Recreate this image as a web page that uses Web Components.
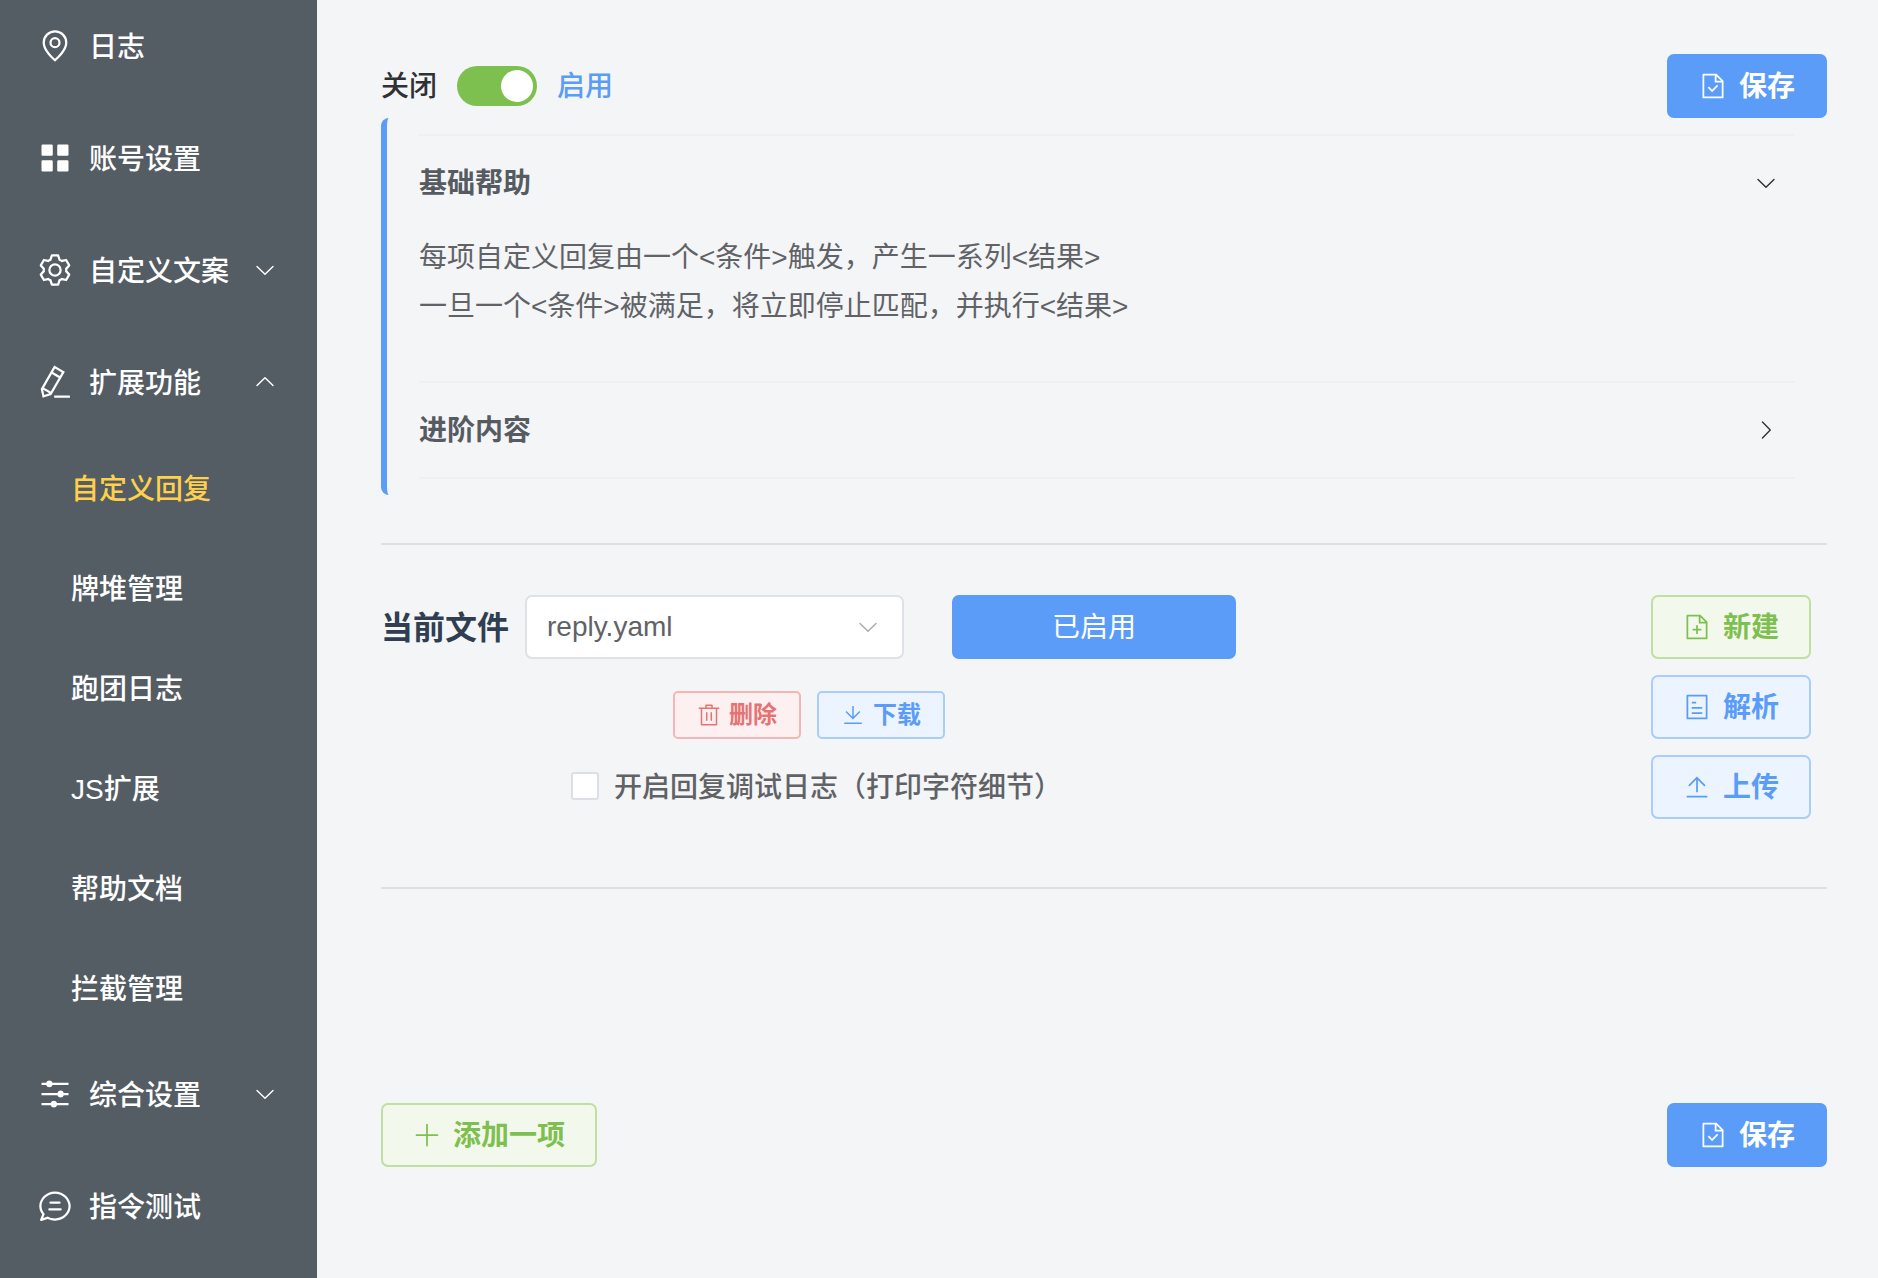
<!DOCTYPE html>
<html lang="zh">
<head>
<meta charset="utf-8">
<title>自定义回复</title>
<style>
  html, body { margin: 0; height: 100%; overflow: hidden; }
  body { font-family: "Liberation Sans", "Noto Sans CJK SC", sans-serif; background: #f4f5f7; }
</style>
</head>
<body>
<app-shell>
  <app-sidebar slot="side">
    <menu-item icon="location">日志</menu-item>
    <menu-item icon="menu">账号设置</menu-item>
    <menu-item icon="setting" arrow="down">自定义文案</menu-item>
    <menu-item icon="pen" arrow="up">扩展功能</menu-item>
    <sub-item active>自定义回复</sub-item>
    <sub-item>牌堆管理</sub-item>
    <sub-item>跑团日志</sub-item>
    <sub-item>JS扩展</sub-item>
    <sub-item>帮助文档</sub-item>
    <sub-item>拦截管理</sub-item>
    <menu-item icon="operation" arrow="down">综合设置</menu-item>
    <menu-item icon="chat">指令测试</menu-item>
  </app-sidebar>

  <page-bar>
    <toggle-switch off-label="关闭" on-label="启用"></toggle-switch>
    <app-button slot="end" kind="primary" icon="doc-check" width="160">保存</app-button>
  </page-bar>

  <help-panel>
    <help-section title="基础帮助" open>
      <div>每项自定义回复由一个&lt;条件&gt;触发，产生一系列&lt;结果&gt;</div>
      <div>一旦一个&lt;条件&gt;被满足，将立即停止匹配，并执行&lt;结果&gt;</div>
    </help-section>
    <help-section title="进阶内容"></help-section>
  </help-panel>

  <page-rule gap-top="48"></page-rule>

  <file-bar>
    <span slot="label">当前文件</span>
    <file-select slot="select" value="reply.yaml"></file-select>
    <app-button slot="state" kind="primary" width="284" plainweight>已启用</app-button>
    <app-button slot="small" kind="danger" icon="delete" small width="128">删除</app-button>
    <app-button slot="small" kind="info" icon="download" small width="128">下载</app-button>
    <check-box slot="check">开启回复调试日志（打印字符细节）</check-box>
    <app-button slot="side" kind="success" icon="doc-add" width="160">新建</app-button>
    <app-button slot="side" kind="info" icon="tickets" width="160">解析</app-button>
    <app-button slot="side" kind="info" icon="upload" width="160">上传</app-button>
  </file-bar>

  <page-rule gap-top="68"></page-rule>

  <page-foot>
    <app-button kind="success" icon="plus" width="216">添加一项</app-button>
    <app-button kind="primary" icon="doc-check" width="160">保存</app-button>
  </page-foot>
</app-shell>

<script>
const ICONS = {
  location: 'M800 416a288 288 0 1 0-576 0c0 118.144 94.528 272.128 288 456.576C705.472 688.128 800 534.144 800 416zM512 960C277.312 746.688 160 565.312 160 416a352 352 0 0 1 704 0c0 149.312-117.312 330.688-352 544zM512 512a96 96 0 1 0 0-192 96 96 0 0 0 0 192zm0 64a160 160 0 1 1 0-320 160 160 0 0 1 0 320z',
  menu: 'M160 448a32 32 0 0 1-32-32V160.064a32 32 0 0 1 32-32h256a32 32 0 0 1 32 32V416a32 32 0 0 1-32 32H160zm448 0a32 32 0 0 1-32-32V160.064a32 32 0 0 1 32-32h255.936a32 32 0 0 1 32 32V416a32 32 0 0 1-32 32H608zM160 896a32 32 0 0 1-32-32V608a32 32 0 0 1 32-32h256a32 32 0 0 1 32 32v256a32 32 0 0 1-32 32H160zm448 0a32 32 0 0 1-32-32V608a32 32 0 0 1 32-32h255.936a32 32 0 0 1 32 32v256a32 32 0 0 1-32 32H608z',
  setting: 'M600.704 64a32 32 0 0 1 30.464 22.208l35.2 109.376c14.784 7.232 28.928 15.36 42.432 24.512l112.384-24.192a32 32 0 0 1 34.432 15.36L944.32 364.8a32 32 0 0 1-4.032 37.504l-77.12 85.12a357.12 357.12 0 0 1 0 49.024l77.12 85.248a32 32 0 0 1 4.032 37.504l-88.704 153.6a32 32 0 0 1-34.432 15.296L708.8 803.904c-13.44 9.088-27.648 17.28-42.368 24.512l-35.264 109.376A32 32 0 0 1 600.704 960H423.296a32 32 0 0 1-30.464-22.208L357.696 828.48a351.616 351.616 0 0 1-42.56-24.64l-112.32 24.256a32 32 0 0 1-34.432-15.36L79.68 659.2a32 32 0 0 1 4.032-37.504l77.12-85.248a357.12 357.12 0 0 1 0-48.896l-77.12-85.248A32 32 0 0 1 79.68 364.8l88.704-153.6a32 32 0 0 1 34.432-15.296l112.32 24.256c13.568-9.152 27.776-17.408 42.56-24.64l35.2-109.312A32 32 0 0 1 423.232 64H600.64zm-23.424 64H446.72l-36.352 113.088-24.512 11.968a294.113 294.113 0 0 0-34.816 20.096l-22.656 15.36-116.224-25.088-65.28 113.152 79.68 88.192-1.92 27.136a293.12 293.12 0 0 0 0 40.192l1.92 27.136-79.808 88.192 65.344 113.152 116.224-25.024 22.656 15.296a294.113 294.113 0 0 0 34.816 20.096l24.512 11.968L446.72 896h130.688l36.48-113.152 24.448-11.904a288.282 288.282 0 0 0 34.752-20.096l22.592-15.296 116.288 25.024 65.28-113.152-79.744-88.192 1.92-27.136a293.12 293.12 0 0 0 0-40.256l-1.92-27.136 79.808-88.128-65.344-113.152-116.288 24.96-22.592-15.232a287.616 287.616 0 0 0-34.752-20.096l-24.448-11.84L577.344 128zM512 320a192 192 0 1 1 0 384 192 192 0 0 1 0-384zm0 64a128 128 0 1 0 0 256 128 128 0 0 0 0-256z',
  pen: 'm199.04 672.64 193.984 112 224-387.968-193.92-112-224 388.032zm-23.872 60.16 32.896 148.288 144.896-45.696L175.168 732.8zM455.04 229.248l193.92 112 56.704-98.112-193.984-112-56.64 98.112zM104.32 708.8l384-665.024 304.768 175.936L409.152 884.8h.064l-248.448 78.336L104.32 708.8zm384 254.272v-64h448v64h-448z',
  operation: 'M389.44 768a96.064 96.064 0 0 1 181.12 0H896v64H570.56a96.064 96.064 0 0 1-181.12 0H128v-64h261.44zm192-288a96.064 96.064 0 0 1 181.12 0H896v64H762.56a96.064 96.064 0 0 1-181.12 0H128v-64h453.44zm-320-288a96.064 96.064 0 0 1 181.12 0H896v64H442.56a96.064 96.064 0 0 1-181.12 0H128v-64h133.44z',
  chat: 'm174.72 855.68 135.296-45.12 23.68 11.84C388.096 849.536 448.576 864 512 864c211.84 0 384-166.784 384-352S723.84 160 512 160 128 326.784 128 512c0 69.12 24.96 139.264 70.848 199.232l22.08 28.8-46.272 115.584zm-45.248 82.56A32 32 0 0 1 89.6 896l58.368-145.92C94.72 680.32 64 596.864 64 512 64 299.904 256 96 512 96s448 203.904 448 416-192 416-448 416a461.056 461.056 0 0 1-206.912-48.384l-175.616 58.56zM352 576h320q32 0 32 32t-32 32H352q-32 0-32-32t32-32zm32-192h256q32 0 32 32t-32 32H384q-32 0-32-32t32-32z',
  'doc-check': 'M805.504 320 640 154.496V320h165.504zM832 384H576V128H192v768h640V384zM160 64h480l256 256v608a32 32 0 0 1-32 32H160a32 32 0 0 1-32-32V96a32 32 0 0 1 32-32zm318.4 582.144 180.992-180.992L704.64 510.4 478.4 736.64 320 578.304l45.248-45.312L478.4 646.144z',
  'doc-add': 'M832 384H576V128H192v768h640V384zm-26.496-64L640 154.496V320h165.504zM160 64h480l256 256v608a32 32 0 0 1-32 32H160a32 32 0 0 1-32-32V96a32 32 0 0 1 32-32zm320 512V448h64v128h128v64H544v128h-64V640H352v-64h128z',
  tickets: 'M192 128v768h640V128H192zm-32-64h704a32 32 0 0 1 32 32v832a32 32 0 0 1-32 32H160a32 32 0 0 1-32-32V96a32 32 0 0 1 32-32zm160 448h384v64H320v-64zm0-192h160v64H320v-64zm0 384h384v64H320v-64z',
  delete: 'M160 256H96a32 32 0 0 1 0-64h256V95.936a32 32 0 0 1 32-32h256a32 32 0 0 1 32 32V192h256a32 32 0 1 1 0 64h-64v672a32 32 0 0 1-32 32H192a32 32 0 0 1-32-32V256zm448-64v-64H416v64h192zM224 896h576V256H224v640zm192-128a32 32 0 0 1-32-32V416a32 32 0 0 1 64 0v320a32 32 0 0 1-32 32zm192 0a32 32 0 0 1-32-32V416a32 32 0 0 1 64 0v320a32 32 0 0 1-32 32z',
  download: 'M160 832h704a32 32 0 1 1 0 64H160a32 32 0 1 1 0-64zm384-253.696 236.288-236.352 45.248 45.248L508.8 704 192 387.2l45.248-45.248L480 584.704V128h64v450.304z',
  upload: 'M160 832h704a32 32 0 1 1 0 64H160a32 32 0 1 1 0-64zm384-578.304V704h-64V247.296L237.248 490.048 192 444.8 508.8 128l316.8 316.8-45.312 45.248L544 253.696z',
  plus: 'M480 480V128a32 32 0 0 1 64 0v352h352a32 32 0 0 1 0 64H544v352a32 32 0 1 1-64 0V544H128a32 32 0 0 1 0-64h352z',
  'arrow-down': 'M831.872 340.864 512 652.672 192.128 340.864a30.592 30.592 0 0 0-42.752 0 29.12 29.12 0 0 0 0 41.6L489.664 714.24a32 32 0 0 0 44.672 0l340.288-331.712a29.12 29.12 0 0 0 0-41.728 30.592 30.592 0 0 0-42.752 0z',
  'arrow-up': 'M831.872 683.136 512 371.328 192.128 683.136a30.592 30.592 0 0 1-42.752 0 29.12 29.12 0 0 1 0-41.6L489.664 309.76a32 32 0 0 1 44.672 0l340.288 331.712a29.12 29.12 0 0 1 0 41.728 30.592 30.592 0 0 1-42.752 0z',
  'arrow-right': 'M340.864 149.312a30.592 30.592 0 0 0 0 42.752L652.736 512 340.864 831.872a30.592 30.592 0 0 0 0 42.752 29.12 29.12 0 0 0 41.728 0L714.24 534.336a32 32 0 0 0 0-44.672L382.592 149.376a29.12 29.12 0 0 0-41.728 0z',
};

function icon(name, size) {
  return `<svg width="${size}" height="${size}" viewBox="0 0 1024 1024" fill="currentColor" style="display:block;flex:none"><path d="${ICONS[name]}"/></svg>`;
}

// shorthand for the usual boilerplate
function define(tag, html, init) {
  customElements.define(tag, class extends HTMLElement {
    connectedCallback() {
      if (this.shadowRoot) return;
      this.attachShadow({ mode: 'open' });
      this.shadowRoot.innerHTML = typeof html === 'function' ? html(this) : html;
      if (init) init(this);
    }
  });
}

define('app-shell', `
<style>
  :host { display: flex; width: 1878px; height: 1278px; overflow: hidden; }
  main { flex: 1; min-width: 0; padding: 54px 51px 0 64px; display: flex; flex-direction: column; }
</style>
<slot name="side"></slot>
<main><slot></slot></main>`);

define('app-sidebar', `
<style>
  :host { display: block; width: 317px; flex: none; height: 1278px; background: #545c64; overflow: hidden; }
  div { margin-top: -10px; }
</style>
<div><slot></slot></div>`);

define('menu-item', el => `
<style>
  :host { display: flex; align-items: center; height: 112px; padding-left: 37px; color: #fff; font-size: 28px; font-weight: 500; }
  .label { margin-left: 16px; flex: 1; padding-bottom: 2px; }
  .arrow { margin-right: 40px; }
</style>
${icon(el.getAttribute('icon'), 36)}
<span class="label"><slot></slot></span>
${el.hasAttribute('arrow') ? `<span class="arrow">${icon('arrow-' + el.getAttribute('arrow'), 24)}</span>` : ''}`);

define('sub-item', `
<style>
  :host { display: flex; align-items: center; box-sizing: border-box; height: 100px; padding: 0 0 2px 71px; color: #fff; font-size: 28px; font-weight: 500; }
  :host([active]) { color: #ffd04b; }
</style>
<slot></slot>`);

define('page-bar', `
<style>
  :host { display: flex; align-items: center; justify-content: space-between; height: 64px; flex: none; }
</style>
<slot></slot><slot name="end"></slot>`);

define('toggle-switch', el => `
<style>
  :host { display: flex; align-items: center; font-size: 28px; font-weight: 500; color: #303133; }
  span { padding-bottom: 4px; }
  .track { width: 80px; height: 40px; border-radius: 20px; background: #7ec050; margin: 0 20px 0 20px; display: flex; align-items: center; justify-content: flex-end; padding-right: 4px; box-sizing: border-box; }
  .thumb { width: 32px; height: 32px; border-radius: 50%; background: #fff; }
  .on { color: #5a9cf8; }
</style>
<span>${el.getAttribute('off-label')}</span>
<div class="track"><div class="thumb"></div></div>
<span class="on">${el.getAttribute('on-label')}</span>`);

define('app-button', el => {
  const small = el.hasAttribute('small');
  const name = el.getAttribute('icon');
  return `
<style>
  :host { display: inline-flex; align-items: center; justify-content: center; box-sizing: border-box; width: ${el.getAttribute('width')}px; height: ${small ? 48 : 64}px; gap: ${small ? 8 : 12}px; border: 2px solid; border-radius: ${small ? 5 : 7}px; font-size: ${small ? 24 : 28}px; font-weight: ${el.hasAttribute('plainweight') ? 400 : 700}; flex: none; }
  :host([kind="primary"]) { background: #5a9cf8; border-color: #5a9cf8; color: #fff; }
  :host([kind="info"]) { background: #ecf5ff; border-color: #a9cdfc; color: #5a9cf8; }
  :host([kind="success"]) { background: #f3f8ec; border-color: #bfe0a0; color: #7ec050; }
  :host([kind="danger"]) { background: #fdf0f0; border-color: #f5b5b5; color: #e57373; }
  span { padding-bottom: ${small ? 6 : 4}px; }
</style>
${name ? icon(name, small ? 24 : 28) : ''}
<span><slot></slot></span>`;
});

define('help-panel', `
<style>
  :host { display: block; flex: none; border-left: 6px solid #5a9cf8; border-radius: 8px 0 0 8px; padding: 16px 32px 16px 32px; }
  div { border-top: 2px solid #eef0f6; }
</style>
<div><slot></slot></div>`);

define('help-section', el => {
  const open = el.hasAttribute('open');
  return `
<style>
  :host { display: block; border-bottom: 2px solid #eef0f6; font-size: 28px; }
  .head { display: flex; align-items: center; justify-content: space-between; height: 94px; font-weight: 700; color: #565b61; }
  .head > span:first-child { padding-bottom: 4px; }
  .chev { color: #303133; margin-right: 17px; }
  .body { padding: 3px 0 50px; line-height: 49px; color: #606266; }
</style>
<div class="head"><span>${el.getAttribute('title')}</span><span class="chev">${icon(open ? 'arrow-down' : 'arrow-right', 24)}</span></div>
${open ? '<div class="body"><slot></slot></div>' : ''}`;
});

define('page-rule', el => `
<style>
  :host { display: block; flex: none; height: 2px; background: #dcdfe6; margin-top: ${el.getAttribute('gap-top')}px; }
</style>`);

define('file-bar', `
<style>
  :host { display: flex; justify-content: space-between; flex: none; margin-top: 50px; padding-right: 16px; }
  .left { display: flex; flex-direction: column; }
  .row { display: flex; align-items: center; height: 64px; }
  .label { font-size: 32px; font-weight: 700; color: #2f3e50; width: 144px; padding-bottom: 4px; }
  .state { margin-left: 48px; display: flex; }
  .small { display: flex; gap: 16px; margin: 32px 0 0 292px; }
  .check { margin: 19px 0 0 190px; }
  .side { display: flex; flex-direction: column; gap: 16px; }
</style>
<div class="left">
  <div class="row">
    <span class="label"><slot name="label"></slot></span>
    <slot name="select"></slot>
    <span class="state"><slot name="state"></slot></span>
  </div>
  <div class="small"><slot name="small"></slot></div>
  <div class="check"><slot name="check"></slot></div>
</div>
<div class="side"><slot name="side"></slot></div>`);

define('file-select', el => `
<style>
  :host { display: flex; align-items: center; justify-content: space-between; box-sizing: border-box; width: 379px; height: 64px; background: #fff; border: 2px solid #dfe1e6; border-radius: 7px; padding: 0 22px 0 20px; color: #606266; font-size: 28px; }
  span { color: #a8abb2; }
</style>
${el.getAttribute('value')}
<span>${icon('arrow-down', 24)}</span>`);

define('check-box', `
<style>
  :host { display: flex; align-items: center; height: 56px; color: #606266; font-size: 28px; font-weight: 500; }
  i { display: block; width: 28px; height: 28px; box-sizing: border-box; background: #fff; border: 2px solid #dcdfe6; border-radius: 3px; margin-right: 15px; }
  span { padding-bottom: 2px; }
</style>
<i></i><span><slot></slot></span>`);

define('page-foot', `
<style>
  :host { display: flex; justify-content: space-between; flex: none; margin-top: 214px; }
</style>
<slot></slot>`);
</script>
</body>
</html>
